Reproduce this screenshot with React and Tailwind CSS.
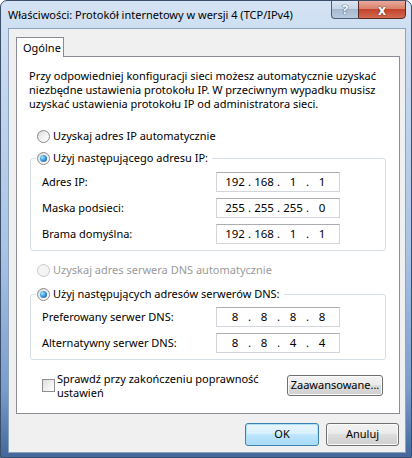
import React from "react";

const FONT = { fontFamily: '"Noto Sans", "Open Sans", sans-serif' };

function Radio({ checked, disabled }) {
  return (
    <span
      className={
        "relative inline-flex items-center justify-center w-[13px] h-[13px] rounded-full border shrink-0 " +
        (disabled
          ? "border-[#c9c9c9] bg-[#f4f4f4]"
          : "border-[#8a8a8a] bg-gradient-to-br from-[#d9d9d9] via-[#f2f2f2] to-white")
      }
    >
      {checked && (
        <span className="w-[7px] h-[7px] rounded-full bg-[radial-gradient(circle_at_35%_35%,#a9e4ff_0%,#3c9be0_45%,#14457f_100%)]" />
      )}
    </span>
  );
}

function IpField({ parts }) {
  return (
    <div className="w-[124px] h-[20px] border border-[#d2d6dc] border-t-[#abadb3] bg-white flex items-center pl-[6px] text-[11.5px] text-black">
      {parts.map((p, i) => (
        <React.Fragment key={i}>
          <span className="w-[24px] text-center leading-none">{p}</span>
          {i < 3 && <span className="w-[5px] text-center leading-none">.</span>}
        </React.Fragment>
      ))}
    </div>
  );
}

function Row({ label, parts }) {
  return (
    <div className="flex items-center h-[20px]">
      <span className="w-[174px] whitespace-nowrap">{label}</span>
      <IpField parts={parts} />
    </div>
  );
}

function Legend({ text }) {
  return (
    <legend className="-ml-[6px] pr-[4px] pl-px h-[16px]">
      <span className="flex items-center gap-[3px] h-[16px] whitespace-nowrap">
        <Radio checked />
        <span>{text}</span>
      </span>
    </legend>
  );
}

function Button({ children, primary, className = "" }) {
  return (
    <div
      className={
        "flex items-center justify-center rounded-[3px] border text-[11px] text-black whitespace-nowrap " +
        (primary
          ? "border-[#3c7fb1] bg-[linear-gradient(#eaf6fd_0%,#d9f0fc_45%,#bee6fd_50%,#a7d9f5_100%)] shadow-[inset_0_0_0_1px_#aee2fa] "
          : "border-[#707070] bg-[linear-gradient(#f2f2f2_0%,#ebebeb_45%,#dddddd_50%,#cfcfcf_100%)] shadow-[inset_0_0_0_1px_#fbfbfb] ") +
        className
      }
    >
      {children}
    </div>
  );
}

export default function App() {
  return (
    <div
      style={FONT}
      className="w-[412px] h-[458px] overflow-hidden rounded-t-[7px] border border-[#3b4f6b] bg-[linear-gradient(180deg,#d4e3f4_0%,#c2d6ee_20%,#a9c3e4_55%,#7a9dcb_85%,#42689c_100%)] text-[11px] text-black flex flex-col"
    >
      {/* Title bar */}
      <div className="h-[27px] flex items-start justify-between">
        <div className="pl-[7px] pt-[6px] text-[11px] leading-[16px] text-black whitespace-nowrap">
          Właściwości: Protokół internetowy w wersji 4 (TCP/IPv4)
        </div>
        <div className="flex mr-[5px] -mt-px">
          <div className="w-[27px] h-[19px] rounded-bl-[4px] border border-[#4a5d7a] border-r-0 bg-[linear-gradient(#dbe6f3_0%,#c6d4e6_45%,#a7b9d0_50%,#b8cade_100%)] flex items-center justify-center">
            <span
              className="text-white font-bold text-[13px] leading-none"
              style={{ textShadow: "0 0 1px #2c3e5c, 0 0 1px #2c3e5c" }}
            >
              ?
            </span>
          </div>
          <div className="w-[48px] h-[19px] rounded-br-[4px] border border-[#5a2a22] bg-[linear-gradient(#e9a99b_0%,#d9826e_45%,#c4432c_50%,#d26a52_100%)] flex items-center justify-center">
            <span
              className="text-white font-bold text-[14px] leading-none"
              style={{ textShadow: "0 0 1px #4a1c14, 0 0 1px #4a1c14" }}
            >
              x
            </span>
          </div>
        </div>
      </div>

      {/* Client area */}
      <div className="ml-[7px] w-[398px] h-[425px] border border-[#8da2bd] bg-[#f0f0f0] flex flex-col pl-[7px] pt-[8px] text-[11px]">
        {/* Tab */}
        <div className="relative z-10 -mb-px w-[48px] h-[20px] border border-b-0 border-[#898c95] bg-white flex items-center pl-[6px] leading-none">
          Ogólne
        </div>
        {/* Panel */}
        <div className="w-[384px] h-[358px] border border-[#898c95] bg-white flex flex-col">
          <div className="mt-[12px] px-[12px] leading-[14px] whitespace-nowrap">
            <div>Przy odpowiedniej konfiguracji sieci możesz automatycznie uzyskać</div>
            <div>niezbędne ustawienia protokołu IP. W przeciwnym wypadku musisz</div>
            <div>uzyskać ustawienia protokołu IP od administratora sieci.</div>
          </div>

          <div className="mt-[17px] ml-[20px] h-[16px] flex items-center gap-[3px]">
            <Radio />
            <span>Uzyskaj adres IP automatycznie</span>
          </div>

          <fieldset className="mt-[6px] ml-[13px] w-[356px] rounded-[3px] border border-[#d5dfe5] pl-[11px] pt-[6px] pb-[6px] flex flex-col gap-[6px]">
            <Legend text="Użyj następującego adresu IP:" />
            <Row label="Adres IP:" parts={["192", "168", "1", "1"]} />
            <Row label="Maska podsieci:" parts={["255", "255", "255", "0"]} />
            <Row label="Brama domyślna:" parts={["192", "168", "1", "1"]} />
          </fieldset>

          <div className="mt-[11px] ml-[20px] h-[16px] flex items-center gap-[3px] text-[#9a9a9a]">
            <Radio disabled />
            <span>Uzyskaj adres serwera DNS automatycznie</span>
          </div>

          <fieldset className="mt-[8px] ml-[13px] w-[356px] rounded-[3px] border border-[#d5dfe5] pl-[11px] pt-[5px] pb-[6px] flex flex-col gap-[6px]">
            <Legend text="Użyj następujących adresów serwerów DNS:" />
            <Row label="Preferowany serwer DNS:" parts={["8", "8", "8", "8"]} />
            <Row label="Alternatywny serwer DNS:" parts={["8", "8", "4", "4"]} />
          </fieldset>

          <div className="mt-[12px] flex items-center justify-between pl-[25px] pr-[16px]">
            <div className="flex items-center gap-[2px]">
              <span className="w-[13px] h-[13px] border border-[#8e8f8f] bg-gradient-to-br from-[#dcdcdc] via-[#f0f0f0] to-white shrink-0" />
              <div className="leading-[13.5px] whitespace-nowrap">
                <div>Sprawdź przy zakończeniu poprawność</div>
                <div>ustawień</div>
              </div>
            </div>
            <Button className="w-[96px] h-[21px]">Zaawansowane...</Button>
          </div>
        </div>

        {/* Bottom buttons */}
        <div className="mt-[9px] flex justify-end gap-[7px] pr-[6px]">
          <Button primary className="w-[74px] h-[23px]">OK</Button>
          <Button className="w-[73px] h-[23px]">Anuluj</Button>
        </div>
      </div>
    </div>
  );
}
